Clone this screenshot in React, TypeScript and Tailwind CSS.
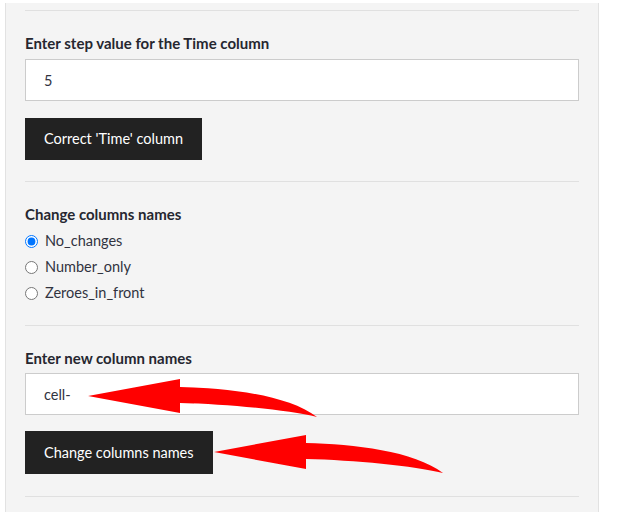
import { useState } from 'react';

function Arrow({ className }: { className: string }) {
  return (
    <svg className={className} width="236" height="44" viewBox="-2 -20 236 44">
      <path
        d="M0 0 L92 -17 L92 -9 C140 -8 200 -1 229 21 C200 14 140 8 92 7 L92 17 Z"
        fill="#ff0000"
      />
    </svg>
  );
}

const options = ['No_changes', 'Number_only', 'Zeroes_in_front'];

export default function App() {
  const [choice, setChoice] = useState('No_changes');
  const [step, setStep] = useState('5');
  const [names, setNames] = useState('cell-');

  return (
    <div className="relative min-h-[512px] bg-white pl-[5px] pt-[3px] font-['Lato',sans-serif] text-[14.5px] text-[#31333f]">
      <div className="w-[594px] border-x border-[#e2e2e2] bg-[#f4f4f4] px-[19px] pt-[7px] pb-[20px]">
        <div className="h-px bg-[#e0e0e0]" />

        <div className="mt-[22px] h-5 text-[15px] font-bold leading-5 text-[#262730]">Enter step value for the Time column</div>
        <input
          value={step}
          onChange={(e) => setStep(e.target.value)}
          className="mt-[6px] block h-[42px] w-full border border-[#cccccc] bg-white pl-[18px] text-[14.5px] text-[#31333f] outline-none"
        />
        <button className="mt-[17px] block h-[42px] bg-[#222222] px-[19px] text-[14.5px] text-white">
          Correct 'Time' column
        </button>
        <div className="mt-[21px] h-px bg-[#e0e0e0]" />

        <div className="mt-[22px] h-5 text-[15px] font-bold leading-5 text-[#262730]">Change columns names</div>
        <div className="mt-[4px] flex flex-col">
          {options.map((o) => (
            <label key={o} className="flex h-[26px] items-center gap-[7px]">
              <input
                type="radio"
                name="cols"
                checked={choice === o}
                onChange={() => setChoice(o)}
                className="m-0 h-[13px] w-[13px]"
              />
              <span>{o}</span>
            </label>
          ))}
        </div>
        <div className="mt-[19px] h-px bg-[#e0e0e0]" />

        <div className="mt-[22px] h-5 text-[15px] font-bold leading-5 text-[#262730]">Enter new column names</div>
        <input
          value={names}
          onChange={(e) => setNames(e.target.value)}
          className="mt-[5px] block h-[42px] w-full border border-[#cccccc] bg-white pl-[18px] text-[14.5px] text-[#31333f] outline-none"
        />
        <button className="mt-[16px] block h-[43px] bg-[#222222] px-[19px] text-[14.5px] text-white">
          Change columns names
        </button>
        <div className="mt-[22px] h-px bg-[#e0e0e0]" />
      </div>

      <Arrow className="absolute left-[86px] top-[376px]" />
      <Arrow className="absolute left-[212px] top-[432px]" />
    </div>
  );
}
